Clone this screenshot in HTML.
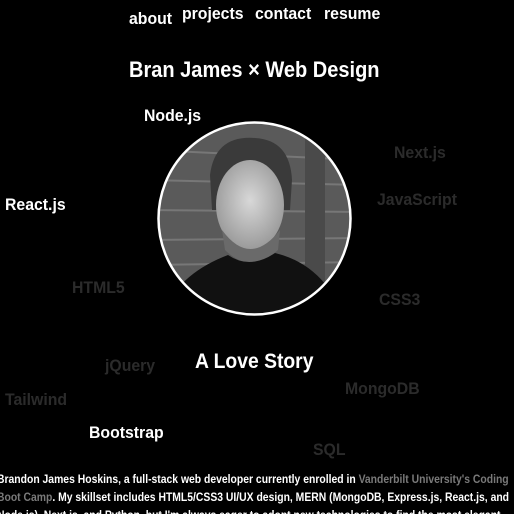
<!DOCTYPE html>
<html><head><meta charset="utf-8"><style>
html,body{margin:0;padding:0;background:#000;width:514px;height:514px;overflow:hidden}
body{position:relative;font-family:"Liberation Sans",sans-serif;font-weight:bold;color:#fff}
.a{position:absolute;white-space:nowrap;line-height:1;transform:scaleX(0.93);transform-origin:0 0}
.g{color:#2b2b2b}
.p{position:absolute;left:-3px;top:471px;width:600px;font-size:11.6px;line-height:18px;white-space:nowrap;transform:scaleX(0.895);transform-origin:0 0}
.p span{color:#7a7a7a}
</style></head><body>
<div class="a" style="left:129px;top:10px;font-size:17px">about</div>
<div class="a" style="left:182px;top:5px;font-size:17px">projects</div>
<div class="a" style="left:255px;top:5px;font-size:17px">contact</div>
<div class="a" style="left:324px;top:5px;font-size:17px">resume</div>
<div class="a" style="left:129px;top:59px;font-size:22px;transform:scaleX(0.91)">Bran James × Web Design</div>
<div class="a" style="left:144px;top:107px;font-size:17px">Node.js</div>
<div class="a g" style="left:394px;top:144px;font-size:17px">Next.js</div>
<div class="a" style="left:5px;top:196px;font-size:17px">React.js</div>
<div class="a g" style="left:377px;top:191px;font-size:17px">JavaScript</div>
<div class="a g" style="left:72px;top:279px;font-size:17px">HTML5</div>
<div class="a g" style="left:379px;top:291px;font-size:17px">CSS3</div>
<div class="a" style="left:195px;top:351px;font-size:21px;transform:scaleX(0.92)">A Love Story</div>
<div class="a g" style="left:105px;top:357px;font-size:17px">jQuery</div>
<div class="a g" style="left:345px;top:380px;font-size:17px">MongoDB</div>
<div class="a g" style="left:5px;top:391px;font-size:17px">Tailwind</div>
<div class="a" style="left:89px;top:424px;font-size:17px">Bootstrap</div>
<div class="a g" style="left:313px;top:441px;font-size:17px">SQL</div>
<svg style="position:absolute;left:0;top:0" width="514" height="514">
<defs><clipPath id="c"><circle cx="254.5" cy="218.5" r="96"/></clipPath>
<radialGradient id="f" cx="0.5" cy="0.45" r="0.55"><stop offset="0" stop-color="#d8d8d8"/><stop offset="1" stop-color="#9a9a9a"/></radialGradient></defs>
<g clip-path="url(#c)">
<rect x="150" y="115" width="210" height="210" fill="#5a5a5a"/>
<g stroke="#8a8a8a" stroke-width="2" opacity=".6">
<line x1="150" y1="150" x2="360" y2="160"/><line x1="150" y1="180" x2="360" y2="185"/><line x1="150" y1="210" x2="360" y2="212"/><line x1="150" y1="240" x2="360" y2="238"/><line x1="150" y1="265" x2="360" y2="262"/></g>
<rect x="305" y="115" width="20" height="200" fill="#4a4a4a"/>
<path d="M210 175 Q215 135 255 138 Q290 140 292 180 L290 210 L212 210Z" fill="#3a3a3a"/>
<ellipse cx="250" cy="205" rx="34" ry="45" fill="url(#f)"/>
<path d="M222 230 Q250 268 280 230 L278 250 Q250 275 225 250Z" fill="#6a6a6a"/>
<path d="M160 320 Q175 275 228 255 Q250 270 275 253 Q325 265 345 320Z" fill="#111"/>
</g>
<circle cx="254.5" cy="218.5" r="96" fill="none" stroke="#fff" stroke-width="2.5"/>
</svg>
<div class="p">Brandon James Hoskins, a full-stack web developer currently enrolled in <span>Vanderbilt University's Coding</span><br><span>Boot Camp</span>. My skillset includes HTML5/CSS3 UI/UX design, MERN (MongoDB, Express.js, React.js, and<br>Node.js), Next.js, and Python, but I'm always eager to adopt new technologies to find the most elegant</div>
</body></html>
